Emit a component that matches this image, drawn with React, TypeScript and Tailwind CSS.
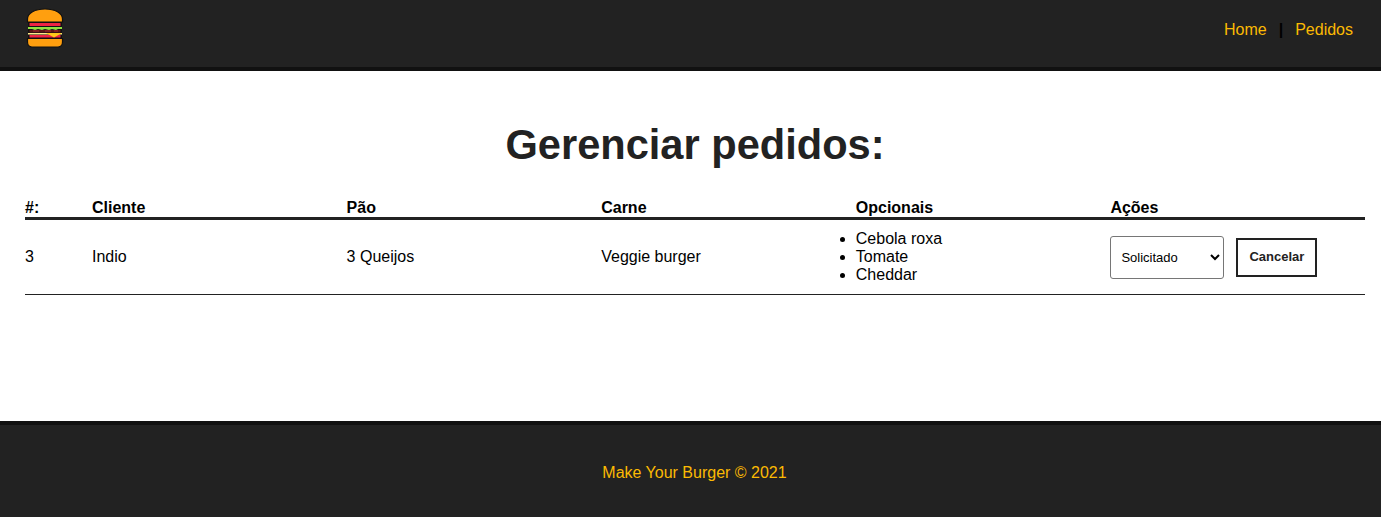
const rows = [
  {
    id: 3,
    cliente: "Indio",
    pao: "3 Queijos",
    carne: "Veggie burger",
    opcionais: ["Cebola roxa", "Tomate", "Cheddar"],
  },
];

export default function App() {
  return (
    <div className="flex h-[517px] flex-col bg-white font-['Liberation_Sans',Arial,sans-serif] text-black">
      <nav className="flex h-[71px] shrink-0 items-start justify-between border-b-4 border-[#111] bg-[#222] pt-2 pr-[28px] pl-[25px]">
        <BurgerLogo />
        <div className="mt-[10px] flex items-center text-base text-[#fcba03]">
          <a href="#home">Home</a>
          <span className="mx-3 font-bold text-black">|</span>
          <a href="#pedidos">Pedidos</a>
        </div>
      </nav>

      <main className="h-[350px] shrink-0 pr-4 pl-[25px]">
        <h1 className="mt-[49px] text-center text-[41.6px] leading-[50px] font-bold text-[#222]">
          Gerenciar pedidos:
        </h1>

        <div className="mt-[25px]">
          {/* Header */}
          <div className="flex h-[25px] items-end border-b-[3px] border-[#222] text-base leading-[18px] font-bold">
            <div className="w-[5%]">#:</div>
            <div className="w-[19%]">Cliente</div>
            <div className="w-[19%]">Pão</div>
            <div className="w-[19%]">Carne</div>
            <div className="w-[19%]">Opcionais</div>
            <div className="w-[19%]">Ações</div>
          </div>

          {rows.map((row) => (
            <div
              key={row.id}
              className="flex h-[75px] items-center border-b border-[#222] text-base"
            >
              <div className="w-[5%]">{row.id}</div>
              <div className="w-[19%]">{row.cliente}</div>
              <div className="w-[19%]">{row.pao}</div>
              <div className="w-[19%]">{row.carne}</div>
              <ul className="w-[19%] list-disc leading-[18px]">
                {row.opcionais.map((item) => (
                  <li key={item}>{item}</li>
                ))}
              </ul>
              <div className="flex w-[19%] items-center">
                <select
                  defaultValue="Solicitado"
                  className="h-[43px] w-[114px] rounded-[3px] border border-[#767676] bg-white px-[6px] text-[13px]"
                >
                  <option>Solicitado</option>
                  <option>Em produção</option>
                  <option>Finalizado</option>
                </select>
                <button className="ml-3 h-[39px] w-[81px] border-2 border-[#222] bg-white text-[13px] font-bold text-[#222]">
                  Cancelar
                </button>
              </div>
            </div>
          ))}
        </div>
      </main>

      <footer className="flex flex-1 items-center justify-center border-t-4 border-[#111] bg-[#222] pt-1 pl-2 text-base text-[#fcba03]">
        <p>Make Your Burger © 2021</p>
      </footer>
    </div>
  );
}

function BurgerLogo() {
  return (
    <svg width="40" height="40" viewBox="0 0 40 40" aria-hidden>
      {/* dark backing for the filling */}
      <rect x="3" y="13.5" width="34" height="17" fill="#111" />
      {/* top tomato */}
      <rect x="4.5" y="15" width="31" height="3" fill="#ee2244" />
      {/* lettuce */}
      <path
        d="M3 19 H37 V21 L33 21 L31 22 L27 21 L24 22 L20 21 L17 22 L13 21 L10 22 L7 21 L3 21 Z"
        fill="#8fe040"
      />
      {/* patty */}
      <rect x="4.5" y="22" width="31" height="2.5" fill="#5c1616" />
      <path d="M8 23 H14 M20 23 H26 M29 23 H33" stroke="#a3262e" strokeWidth="1" />
      {/* pale cheese layer */}
      <rect x="3" y="25" width="34" height="1.5" fill="#ffe88a" />
      {/* bottom tomato */}
      <rect x="4.5" y="27" width="31" height="2.5" fill="#ee2244" />
      {/* cheese corner */}
      <path d="M21 25 H37 L29 29.5 Z" fill="#ffc71a" />
      {/* bottom bun */}
      <path
        d="M2.5 30.5 H37.5 V34 C37.5 37 35.5 39 33 39 H7 C4.5 39 2.5 37 2.5 34 Z"
        fill="#ff9f0f"
        stroke="#111"
        strokeWidth="1.2"
      />
      {/* top bun */}
      <path
        d="M2.5 14 V11 C2.5 5 10 1 20 1 C30 1 37.5 5 37.5 11 V14 Z"
        fill="#ff9f0f"
        stroke="#111"
        strokeWidth="1.2"
      />
    </svg>
  );
}
